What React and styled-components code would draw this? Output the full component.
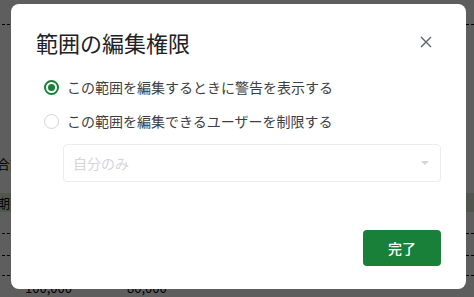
import React from "react";
import styled, { createGlobalStyle } from "styled-components";

const Global = createGlobalStyle`
  html, body {
    margin: 0;
    padding: 0;
    width: 474px;
    height: 297px;
    overflow: hidden;
    background: #fff;
    font-family: "Noto Sans CJK JP", "Noto Sans", Roboto, sans-serif;
  }
`;

export default function App() {
  return (
    <>
      <Global />
      <Sheet>
        <SheetRow h={25} dashed />
        <SheetRow h={128} />
        <SheetRow h={20}>
          <Cell>合計</Cell>
        </SheetRow>
        <SheetRow h={20} />
        <SheetRow h={19} bg="#d9ead3">
          <Cell>期売</Cell>
        </SheetRow>
        <SheetRow h={22} dashed />
        <SheetRow h={22} dashed />
        <SheetRow h={20} dashed />
        <SheetRow h={21} end>
          <Cell w={130} pl={28}>100,000</Cell>
          <Cell>80,000</Cell>
        </SheetRow>
      </Sheet>
      <Overlay>
        <Dialog>
          <Header>
            <Title>範囲の編集権限</Title>
            <CloseButton aria-label="閉じる">
              <svg width="12" height="12" viewBox="0 0 12 12">
                <path d="M1 1L11 11M11 1L1 11" stroke="#5f6368" strokeWidth="1.4" fill="none" />
              </svg>
            </CloseButton>
          </Header>
          <Options>
            <Option>
              <Radio checked />
              <Label>この範囲を編集するときに警告を表示する</Label>
            </Option>
            <Option>
              <Radio />
              <Label>この範囲を編集できるユーザーを制限する</Label>
            </Option>
          </Options>
          <Select>
            <Placeholder>自分のみ</Placeholder>
            <Arrow />
          </Select>
          <Footer>
            <DoneButton>完了</DoneButton>
          </Footer>
        </Dialog>
      </Overlay>
    </>
  );
}

const Sheet = styled.div`
  display: flex;
  flex-direction: column;
  width: 474px;
  height: 297px;
`;
const SheetRow = styled.div`
  flex: 0 0 ${(p) => p.h}px;
  display: flex;
  align-items: ${(p) => (p.end ? "flex-end" : "center")};
  padding-bottom: ${(p) => (p.end ? 3 : 0)}px;
  background: ${(p) => p.bg || "transparent"};
  border-bottom: ${(p) => (p.dashed ? "1px dashed #000" : "none")};
  box-sizing: border-box;
  font-size: 13px;
  color: #000;
  line-height: 1;
  margin-left: -3px;
`;
const Cell = styled.span`
  width: ${(p) => (p.w ? `${p.w}px` : "auto")};
  padding-left: ${(p) => p.pl || 0}px;
  box-sizing: border-box;
  white-space: nowrap;
`;

const Overlay = styled.div`
  position: fixed;
  inset: 0;
  background: rgba(0, 0, 0, 0.63);
  display: flex;
  align-items: flex-start;
  padding: 4px 0 0 11px;
`;
const Dialog = styled.div`
  width: 455px;
  height: 285px;
  box-sizing: border-box;
  background: #fff;
  border-radius: 8px;
  padding: 24px 25px 23px 25px;
  display: flex;
  flex-direction: column;
`;
const Header = styled.div`
  display: flex;
  align-items: center;
  justify-content: space-between;
  height: 28px;
`;
const Title = styled.h1`
  margin: 0;
  font-size: 22px;
  font-weight: 400;
  line-height: 28px;
  color: #202124;
`;
const CloseButton = styled.button`
  width: 24px;
  height: 24px;
  border: none;
  background: none;
  padding: 0;
  margin-right: 3px;
  display: flex;
  align-items: center;
  justify-content: center;
`;
const Options = styled.div`
  display: flex;
  flex-direction: column;
  gap: 10px;
  margin-top: 19px;
`;
const Option = styled.label`
  display: flex;
  align-items: center;
  gap: 8px;
  height: 24px;
  padding-left: 8px;
`;
const Radio = styled.span`
  width: 15px;
  height: 15px;
  box-sizing: border-box;
  border-radius: 50%;
  border: ${(p) => (p.checked ? "2px solid #188038" : "1.5px solid #d2d4d7")};
  display: flex;
  align-items: center;
  justify-content: center;
  &::after {
    content: "";
    width: 7px;
    height: 7px;
    border-radius: 50%;
    background: ${(p) => (p.checked ? "#188038" : "transparent")};
  }
`;
const Label = styled.span`
  font-size: 14px;
  color: #3c4043;
  line-height: 20px;
`;
const Select = styled.div`
  margin: 11px 0 0 27px;
  height: 38px;
  box-sizing: border-box;
  border: 1px solid #ebedef;
  border-radius: 4px;
  display: flex;
  align-items: center;
  justify-content: space-between;
  padding: 0 11px 0 9px;
`;
const Placeholder = styled.span`
  font-size: 14px;
  color: #d3d5d8;
`;
const Arrow = styled.span`
  width: 0;
  height: 0;
  border-left: 4px solid transparent;
  border-right: 4px solid transparent;
  border-top: 4px solid #d3d5d8;
`;
const Footer = styled.div`
  margin-top: auto;
  display: flex;
  justify-content: flex-end;
`;
const DoneButton = styled.button`
  width: 78px;
  height: 36px;
  border: none;
  border-radius: 4px;
  background: #188038;
  color: #fff;
  font-family: inherit;
  font-size: 14px;
  font-weight: 500;
`;
